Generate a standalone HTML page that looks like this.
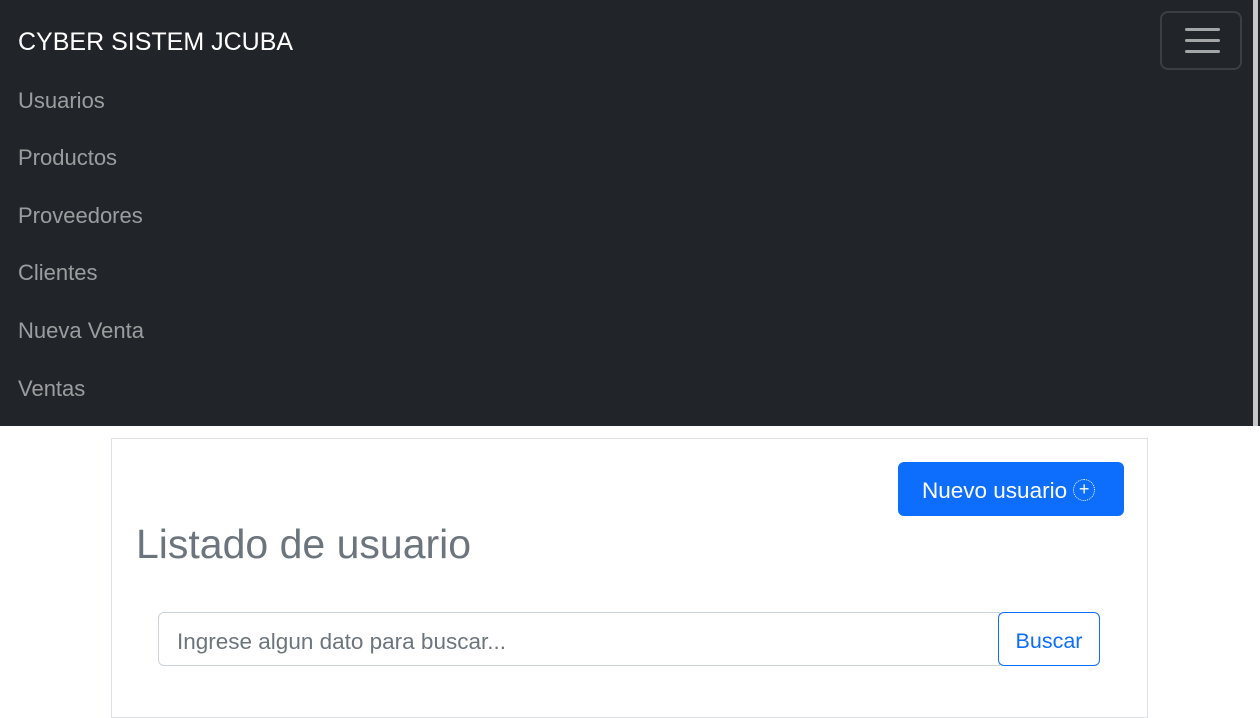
<!DOCTYPE html>
<html><head><style>
*{box-sizing:border-box;margin:0;padding:0}
body{width:1260px;height:705px;overflow:hidden;background:#fff;font-family:"Liberation Sans",sans-serif;position:relative}
nav{position:absolute;left:0;top:0;width:1260px;height:426px;background:#212529}
.brand{position:absolute;left:18px;top:28px;color:#fff;font-size:25px}
.link{position:absolute;left:18px;color:rgba(255,255,255,.55);font-size:22px}
.tog{position:absolute;left:1160px;top:11px;width:82px;height:59px;border:2px solid #3b3f44;border-radius:8px}
.tog i{position:absolute;left:23px;width:35px;height:3px;background:#a3a5a7;border-radius:2px}
.sb{position:absolute;left:1253px;top:0;width:5px;height:426px;background:#c8c8c8}
.card{position:absolute;left:111px;top:438px;width:1037px;height:280px;border:1px solid #dee2e6}
.btn{position:absolute;left:898px;top:462px;width:226px;height:54px;background:#0d6efd;border-radius:6px;color:#fff;font-size:22.5px;line-height:58px;padding-left:24px;white-space:nowrap}
.plus{display:inline-block;vertical-align:middle;margin-left:6px;margin-top:-4px;width:22px;height:22px;border:1.5px dotted #fff;border-radius:50%;font-size:18px;line-height:18px;text-align:center}
h1{position:absolute;left:136px;top:521px;font-size:41px;font-weight:400;color:#6c757d}
.inp{position:absolute;left:158px;top:612px;width:842px;height:54px;border:1px solid #ced4da;border-radius:6px 0 0 6px;color:#6c757d;font-size:22.5px;line-height:57px;padding-left:18px}
.bus{position:absolute;left:998px;top:612px;width:102px;height:54px;border:1px solid #0d6efd;border-radius:6px;color:#0d6efd;font-size:21.5px;line-height:57px;text-align:center;background:#fff}
</style></head><body>
<nav>
<div class="brand">CYBER SISTEM JCUBA</div>
<div class="link" style="top:88px">Usuarios</div>
<div class="link" style="top:145px">Productos</div>
<div class="link" style="top:203px">Proveedores</div>
<div class="link" style="top:260px">Clientes</div>
<div class="link" style="top:318px">Nueva Venta</div>
<div class="link" style="top:376px">Ventas</div>
<div class="tog"><i style="top:15px"></i><i style="top:26px"></i><i style="top:37px"></i></div>
<div class="sb"></div>
</nav>
<div class="card"></div>
<div class="btn">Nuevo usuario<span class="plus">+</span></div>
<h1>Listado de usuario</h1>
<div class="inp">Ingrese algun dato para buscar...</div>
<div class="bus">Buscar</div>
</body></html>
